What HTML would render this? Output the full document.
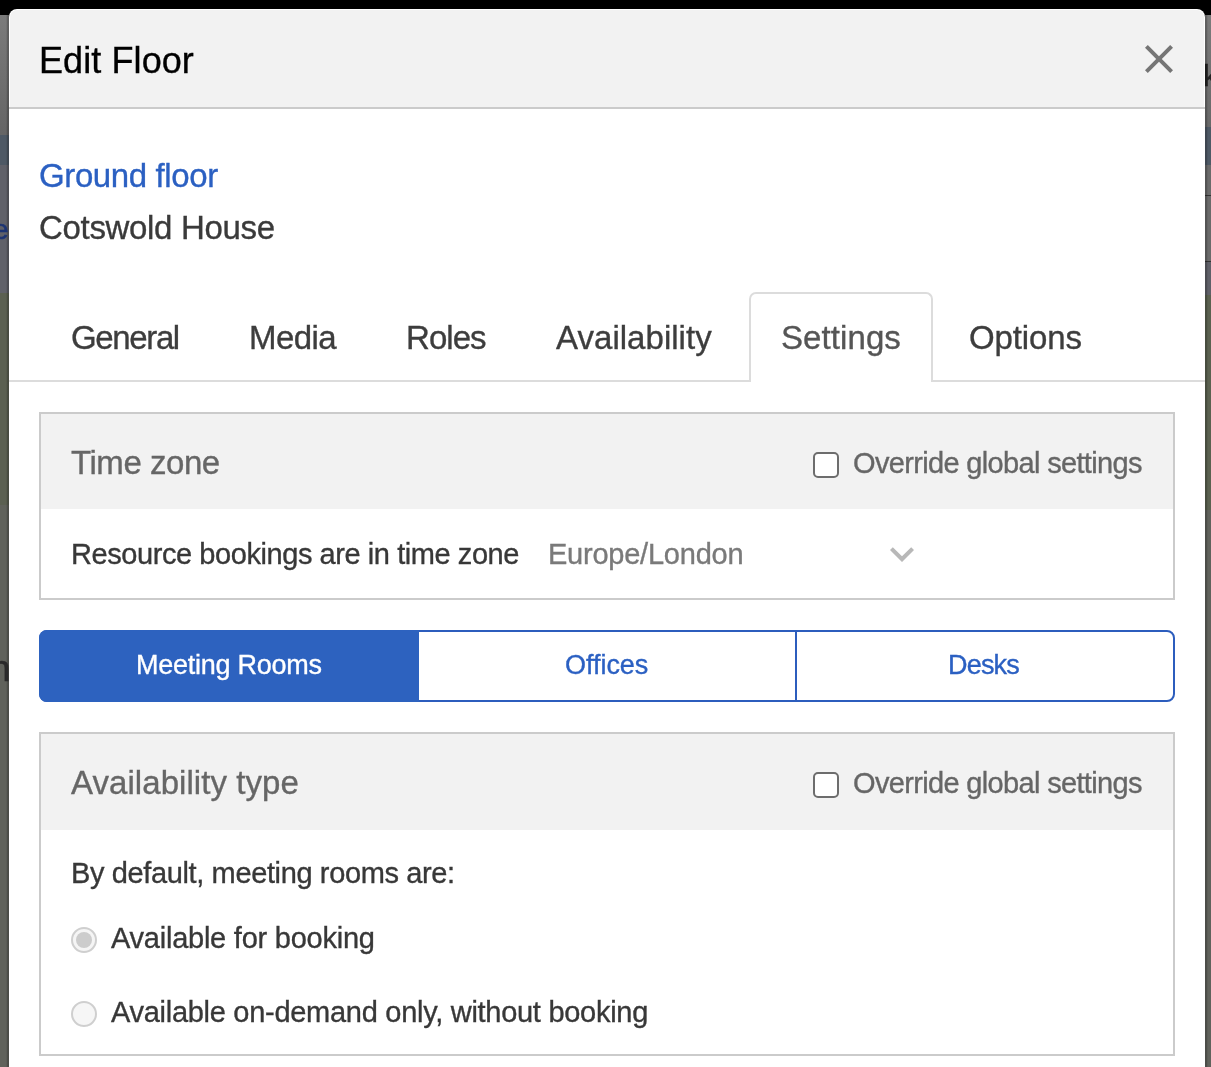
<!DOCTYPE html>
<html><head><meta charset="utf-8">
<style>
html,body{margin:0;padding:0;}
body{width:1211px;height:1067px;position:relative;overflow:hidden;background:#000;font-family:"Liberation Sans",sans-serif;}
.abs{position:absolute;}
#lstrip{left:0;top:15px;width:9px;height:1052px;background:linear-gradient(to bottom,#7b7b7b 0,#656565 120px,#4e5965 120px,#4e5965 150px,#606169 150px,#606169 278px,#5b6051 278px,#5b6051 490px,#60625b 490px,#60625b 1052px);}
#lshade{left:6px;top:15px;width:3px;height:1052px;background:linear-gradient(to right,rgba(0,0,0,0.06) 0,rgba(0,0,0,0.06) 1px,rgba(0,0,0,0.2) 1px,rgba(0,0,0,0.22) 3px);}
#rstrip{left:1205px;top:15px;width:6px;height:1052px;background:linear-gradient(to bottom,#7b7b7b 0,#686868 112px,#4e5965 112px,#4e5965 150px,#6a6a6a 150px,#6a6a6a 180px,#333 180px,#333 181px,#6a6a6a 181px,#6a6a6a 246px,#333 246px,#333 247px,#5f6068 247px,#5f6068 280px,#5b6150 280px,#5b6150 495px,#60625c 495px,#60625c 1052px);}
#rshade{left:1205px;top:15px;width:3px;height:1052px;background:linear-gradient(to left,rgba(0,0,0,0.06) 0,rgba(0,0,0,0.06) 1px,rgba(0,0,0,0.2) 1px,rgba(0,0,0,0.22) 3px);}
#modal{left:9px;top:9px;width:1196px;height:1100px;background:#fff;border-radius:8px 8px 0 0;overflow:hidden;}
#hdr{left:1px;top:1px;width:1194px;height:97px;background:#f2f2f2;border-radius:7px 7px 0 0;}
#hdrline{left:0;top:98px;width:1196px;height:2px;background:#cbcbcb;}
.t{position:absolute;white-space:pre;line-height:1;will-change:transform;-webkit-text-stroke:0.35px currentColor;}
</style></head>
<body>
<div id="lstrip" class="abs"></div><div id="lshade" class="abs"></div>
<div id="rstrip" class="abs"></div>
<div class="t" style="left:1203px;top:61px;font-size:30px;color:#222;-webkit-text-stroke:0.4px #222">k</div>
<div class="t" style="left:-7px;top:216px;font-size:28px;color:#1d3473;-webkit-text-stroke:0.6px #1d3473">e</div>
<div class="t" style="left:-10px;top:650px;font-size:37px;color:#2a2a2a;-webkit-text-stroke:0.5px #2a2a2a">n</div><div id="rshade" class="abs"></div>
<div id="modal" class="abs">
  <div id="hdr" class="abs"></div>
  <div id="hdrline" class="abs"></div>
</div>
<!-- close X -->
<svg class="abs" style="left:1135px;top:35px" width="48" height="48" viewBox="0 0 24 24">
  <path d="M19 6.41L17.59 5 12 10.59 6.41 5 5 6.41 10.59 12 5 17.59 6.41 19 12 13.41 17.59 19 19 17.59 13.41 12z" fill="#757575"/>
</svg>

<!-- tabs underline -->
<div class="abs" style="left:9px;top:380px;width:1196px;height:2px;background:#dcdcdc"></div>
<div class="abs" style="left:749px;top:292px;width:180px;height:88px;border:2px solid #dcdcdc;border-bottom:none;border-radius:7px 7px 0 0;background:#fff"></div>

<!-- time zone panel -->
<div class="abs" style="left:39px;top:412px;width:1132px;height:184px;border:2px solid #cbcbcb;background:#fff"></div>
<div class="abs" style="left:41px;top:414px;width:1132px;height:95px;background:#f2f2f2"></div>
<div class="abs" style="left:813px;top:452px;width:22px;height:22px;border:2px solid #6d6d6d;border-radius:5px;background:#fff"></div>
<svg class="abs" style="left:878px;top:530px" width="48" height="48" viewBox="0 0 24 24">
  <path d="M16.59 8.59L12 13.17 7.41 8.59 6 10l6 6 6-6z" fill="#b8b8b8"/>
</svg>

<!-- segmented -->
<div class="abs" style="left:39px;top:630px;width:1132px;height:68px;border:2px solid #2c5dbd;border-radius:8px;background:#fff"></div>
<div class="abs" style="left:39px;top:630px;width:380px;height:72px;background:#2d62bf;border-radius:8px 0 0 8px"></div>
<div class="abs" style="left:795px;top:630px;width:2px;height:72px;background:#2c5dbd"></div>

<!-- availability panel -->
<div class="abs" style="left:39px;top:732px;width:1132px;height:320px;border:2px solid #cbcbcb;background:#fff"></div>
<div class="abs" style="left:41px;top:734px;width:1132px;height:96px;background:#f2f2f2"></div>
<div class="abs" style="left:813px;top:772px;width:22px;height:22px;border:2px solid #6d6d6d;border-radius:5px;background:#fff"></div>

<div class="abs" style="left:71px;top:927px;width:22px;height:22px;border:2px solid #cfcfcf;border-radius:50%;background:#f5f5f5"></div>
<div class="abs" style="left:76px;top:932px;width:16px;height:16px;border-radius:50%;background:#cccccc"></div>
<div class="abs" style="left:71px;top:1001px;width:22px;height:22px;border:2px solid #cfcfcf;border-radius:50%;background:#f6f6f6"></div>

<!-- TEXTS -->
<div class="t" style="left:39px;top:43px;font-size:36px;letter-spacing:0.088px;color:#000">Edit Floor</div>
<div class="t" style="left:39.3px;top:158.8px;font-size:33px;letter-spacing:-0.382px;color:#2b60c2">Ground floor</div>
<div class="t" style="left:39.3px;top:210.8px;font-size:33px;letter-spacing:-0.323px;color:#3a3a3a">Cotswold House</div>
<div class="t" style="left:71.1px;top:321.1px;font-size:33px;letter-spacing:-1.367px;color:#3d3d3d">General</div>
<div class="t" style="left:249.2px;top:321.1px;font-size:33px;letter-spacing:-0.6px;color:#3d3d3d">Media</div>
<div class="t" style="left:406.4px;top:321.1px;font-size:33px;letter-spacing:-0.95px;color:#3d3d3d">Roles</div>
<div class="t" style="left:556px;top:321.1px;font-size:33px;letter-spacing:0.036px;color:#3d3d3d">Availability</div>
<div class="t" style="left:781.1px;top:321.1px;font-size:33px;letter-spacing:0.085px;color:#555555">Settings</div>
<div class="t" style="left:968.8px;top:321.1px;font-size:33px;letter-spacing:-0.133px;color:#3d3d3d">Options</div>
<div class="t" style="left:71.3px;top:446.2px;font-size:33px;letter-spacing:-0.451px;color:#666666">Time zone</div>
<div class="t" style="left:853.4px;top:448.9px;font-size:29px;letter-spacing:-0.661px;color:#666666">Override global settings</div>
<div class="t" style="left:70.9px;top:539.9px;font-size:29px;letter-spacing:-0.43px;color:#383838">Resource bookings are in time zone</div>
<div class="t" style="left:547.7px;top:539.9px;font-size:29px;letter-spacing:-0.233px;color:#7a7a7a">Europe/London</div>
<div class="t" style="left:135.8px;top:652.2px;font-size:27px;letter-spacing:-0.266px;color:#ffffff">Meeting Rooms</div>
<div class="t" style="left:565px;top:652.2px;font-size:27px;letter-spacing:-0.034px;color:#2b60c2">Offices</div>
<div class="t" style="left:948.4px;top:652.2px;font-size:27px;letter-spacing:-0.8px;color:#2b60c2">Desks</div>
<div class="t" style="left:71.2px;top:765.8px;font-size:33px;letter-spacing:0.062px;color:#666666">Availability type</div>
<div class="t" style="left:853.4px;top:768.9px;font-size:29px;letter-spacing:-0.661px;color:#666666">Override global settings</div>
<div class="t" style="left:70.9px;top:858.7px;font-size:29px;letter-spacing:-0.373px;color:#383838">By default, meeting rooms are:</div>
<div class="t" style="left:111.2px;top:923.8px;font-size:29px;letter-spacing:-0.24px;color:#383838">Available for booking</div>
<div class="t" style="left:111.2px;top:997.8px;font-size:29px;letter-spacing:-0.285px;color:#383838">Available on-demand only, without booking</div>
</body></html>
